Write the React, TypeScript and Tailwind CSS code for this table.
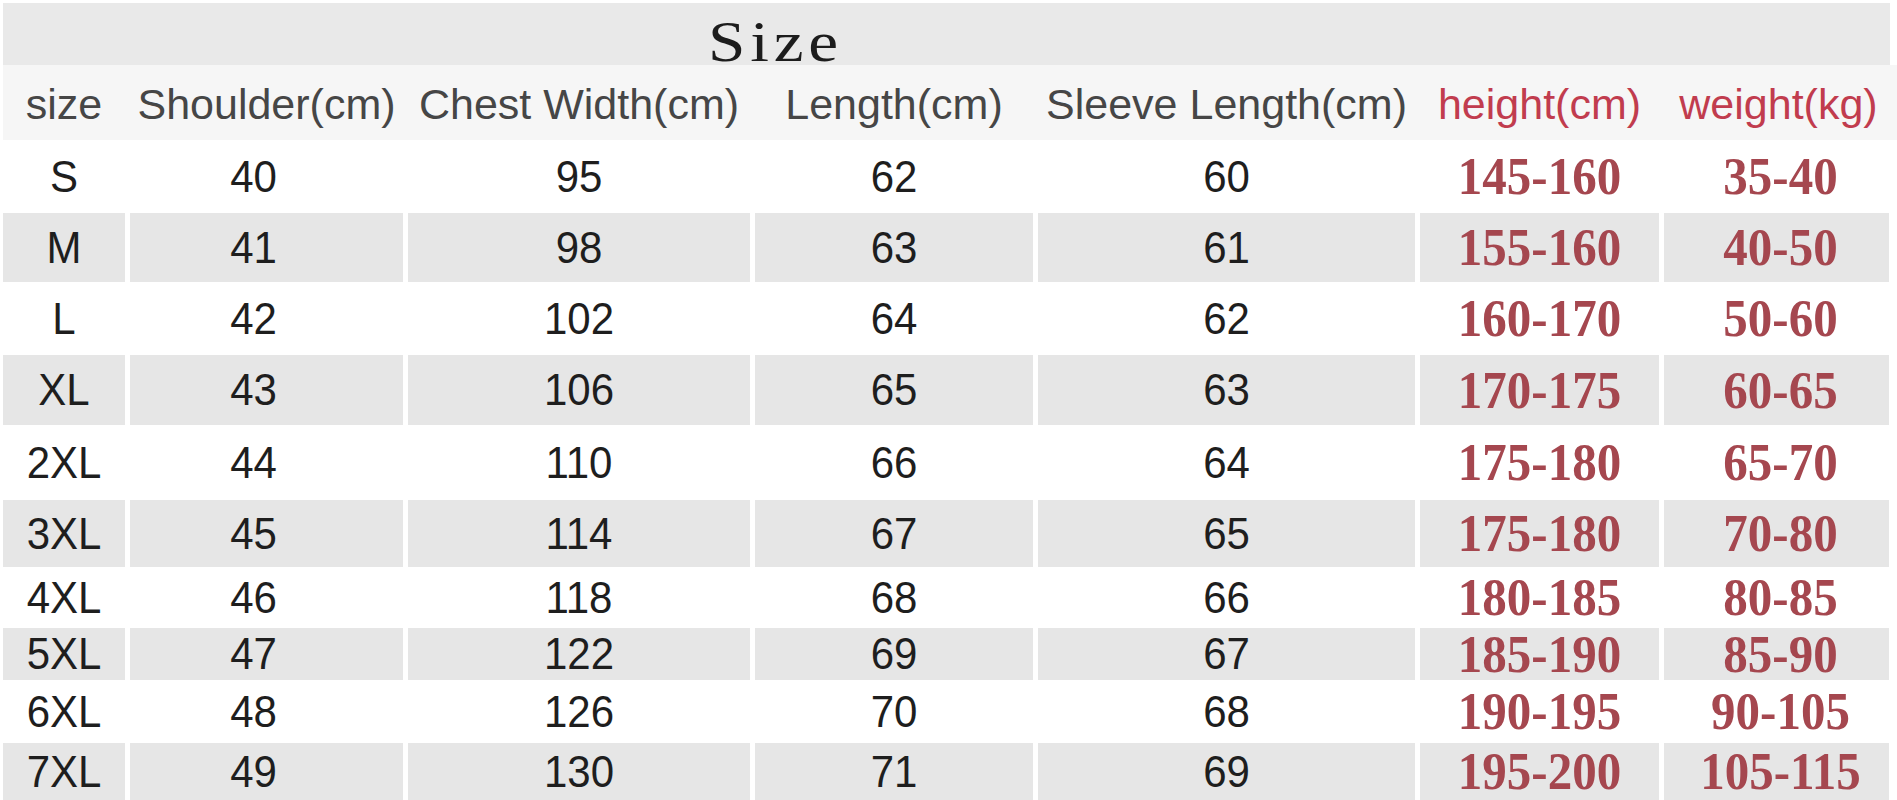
import React from "react";

type Row = {
  size: string;
  shoulder: string;
  chest: string;
  length: string;
  sleeve: string;
  height: string;
  weight: string;
  h: string;
  gray: boolean;
};

const rows: Row[] = [
  { size: "S", shoulder: "40", chest: "95", length: "62", sleeve: "60", height: "145-160", weight: "35-40", h: "h-[73px]", gray: false },
  { size: "M", shoulder: "41", chest: "98", length: "63", sleeve: "61", height: "155-160", weight: "40-50", h: "h-[69px]", gray: true },
  { size: "L", shoulder: "42", chest: "102", length: "64", sleeve: "62", height: "160-170", weight: "50-60", h: "h-[73px]", gray: false },
  { size: "XL", shoulder: "43", chest: "106", length: "65", sleeve: "63", height: "170-175", weight: "60-65", h: "h-[70px]", gray: true },
  { size: "2XL", shoulder: "44", chest: "110", length: "66", sleeve: "64", height: "175-180", weight: "65-70", h: "h-[75px]", gray: false },
  { size: "3XL", shoulder: "45", chest: "114", length: "67", sleeve: "65", height: "175-180", weight: "70-80", h: "h-[67px]", gray: true },
  { size: "4XL", shoulder: "46", chest: "118", length: "68", sleeve: "66", height: "180-185", weight: "80-85", h: "h-[61px]", gray: false },
  { size: "5XL", shoulder: "47", chest: "122", length: "69", sleeve: "67", height: "185-190", weight: "85-90", h: "h-[52px]", gray: true },
  { size: "6XL", shoulder: "48", chest: "126", length: "70", sleeve: "68", height: "190-195", weight: "90-105", h: "h-[63px]", gray: false },
  { size: "7XL", shoulder: "49", chest: "130", length: "71", sleeve: "69", height: "195-200", weight: "105-115", h: "h-[57px]", gray: true },
];

const grid =
  "grid grid-cols-[122px_273px_342px_278px_377px_239px_225px] gap-x-[5px]";

function Cell({
  gray,
  children,
  className = "",
}: {
  gray: boolean;
  children: React.ReactNode;
  className?: string;
}) {
  return (
    <div
      className={`flex items-center justify-center whitespace-nowrap ${
        gray ? "bg-[#e6e6e6]" : "bg-white"
      } ${className}`}
    >
      <span className="block scale-y-[1.07]">{children}</span>
    </div>
  );
}

const sans = "font-['Liberation_Sans',Arial,sans-serif]";
const serif = "font-['Liberation_Serif','Times_New_Roman',serif]";

export default function App() {
  return (
    <div className="w-[1897px] h-[800px] bg-white overflow-hidden pt-[3px] pl-[3px]">
      <div className="w-[1887px] h-[62px] bg-[#e9e9e9] pl-[705px] pt-[11px]">
        <div
          className={`${serif} inline-block origin-left scale-x-[1.2] text-[56px] leading-none tracking-[4px] text-[#1c1c1c]`}
        >
          Size
        </div>
      </div>

      <div
        className={`${grid} h-[75px] bg-[#f6f6f6] pt-[4px] ${sans} text-[43px] leading-none text-[#464646]`}
      >
        <div className="flex items-center justify-center whitespace-nowrap">size</div>
        <div className="flex items-center justify-center whitespace-nowrap">Shoulder(cm)</div>
        <div className="flex items-center justify-center whitespace-nowrap">Chest Width(cm)</div>
        <div className="flex items-center justify-center whitespace-nowrap">Length(cm)</div>
        <div className="flex items-center justify-center whitespace-nowrap">Sleeve Length(cm)</div>
        <div className="flex items-center justify-center whitespace-nowrap text-[#c13c4e]">height(cm)</div>
        <div className="flex items-center justify-center whitespace-nowrap text-[#c13c4e] pl-[4px]">weight(kg)</div>
      </div>

      {rows.map((r) => (
        <div key={r.size} className={`${grid} ${r.h}`}>
          <Cell gray={r.gray} className={`${sans} text-[42px] leading-none text-[#1e1e1e]`}>
            {r.size}
          </Cell>
          <Cell gray={r.gray} className={`${sans} text-[42px] leading-none text-[#1e1e1e] pr-[26px]`}>
            {r.shoulder}
          </Cell>
          <Cell gray={r.gray} className={`${sans} text-[42px] leading-none text-[#1e1e1e]`}>
            {r.chest}
          </Cell>
          <Cell gray={r.gray} className={`${sans} text-[42px] leading-none text-[#1e1e1e]`}>
            {r.length}
          </Cell>
          <Cell gray={r.gray} className={`${sans} text-[42px] leading-none text-[#1e1e1e]`}>
            {r.sleeve}
          </Cell>
          <Cell gray={r.gray} className={`${serif} font-bold text-[49px] leading-none text-[#a5474f]`}>
            {r.height}
          </Cell>
          <Cell gray={r.gray} className={`${serif} font-bold text-[49px] leading-none text-[#a5474f] pl-[8px]`}>
            {r.weight}
          </Cell>
        </div>
      ))}
    </div>
  );
}
